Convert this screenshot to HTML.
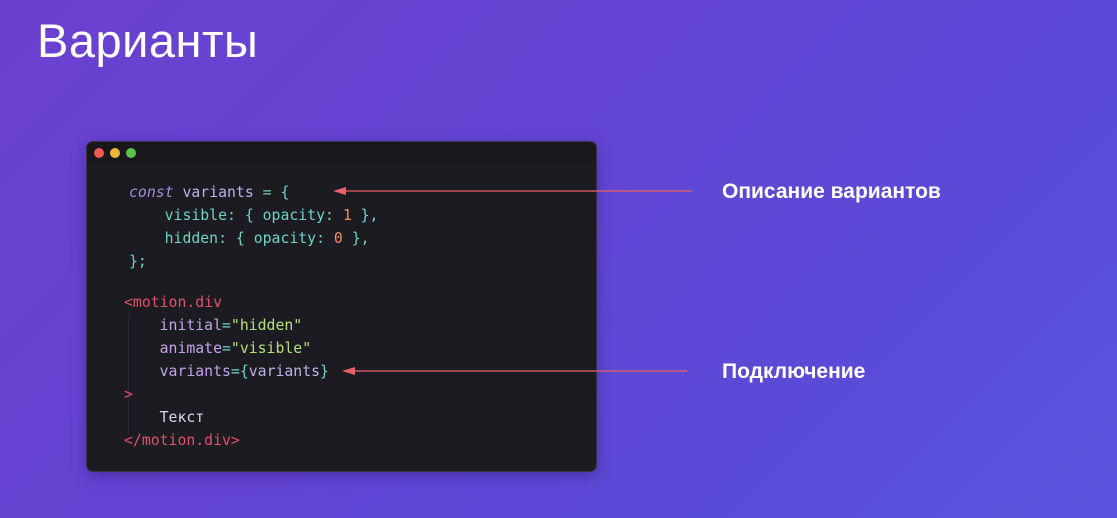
<!DOCTYPE html>
<html><head><meta charset="utf-8"><style>
html,body{margin:0;padding:0}
body{width:1117px;height:518px;overflow:hidden;position:relative;font-family:"Liberation Sans",sans-serif;
background:linear-gradient(135deg,#6b40cf 0%,#6345d3 45%,#5a4bd6 75%,#5b55dc 100%);}
h1{position:absolute;left:37px;top:13px;margin:0;font-weight:400;font-size:47px;color:#fff;letter-spacing:0.5px}
.win{position:absolute;left:86px;top:141px;width:511px;height:331px;background:#1c1b22;border-radius:7px;border:1px solid #3a3446;box-sizing:border-box;overflow:hidden;box-shadow:0 4px 14px rgba(30,10,80,.35)}
.bar{height:22px;background:#18171c;position:relative}
.dot{position:absolute;top:6px;width:10px;height:10px;border-radius:50%}
pre{position:absolute;margin:0;font-family:"DejaVu Sans Mono","Liberation Mono",monospace;font-size:14.8px;line-height:23px;color:#d8d8e0}
.k{color:#a58bd6;font-style:italic}.v{color:#c0b0ea}.p{color:#6fd3c3}.n{color:#f08f5a}.t{color:#e0506c}.s{color:#b4e07a}.a{color:#c2a4e8}
.lbl{position:absolute;color:#fff;font-size:21px;font-weight:700}
.guide{position:absolute;width:1px;background:#2b2a32}
</style></head><body>
<h1>Варианты</h1>
<div class="win">
<div class="bar"><div class="dot" style="left:7px;background:#ee5b53"></div><div class="dot" style="left:23px;background:#e9b73a"></div><div class="dot" style="left:39px;background:#5ec24a"></div></div>
<div class="guide" style="left:41px;top:172px;height:120px"></div>
<pre style="left:42px;top:39px"><span class="k">const</span> <span class="v">variants</span> <span class="p">=</span> <span class="p">{</span>
    <span class="p">visible: { opacity: </span><span class="n">1</span><span class="p"> },</span>
    <span class="p">hidden: { opacity: </span><span class="n">0</span><span class="p"> },</span>
<span class="p">};</span></pre>
<pre style="left:37px;top:149px"><span class="t">&lt;motion.div</span>
    <span class="a">initial</span><span class="p">=</span><span class="s">"hidden"</span>
    <span class="a">animate</span><span class="p">=</span><span class="s">"visible"</span>
    <span class="a">variants</span><span class="p">={</span><span class="v">variants</span><span class="p">}</span>
<span class="t">&gt;</span>
    Текст
<span class="t">&lt;/motion.div&gt;</span></pre>
</div>
<svg width="1117" height="518" style="position:absolute;left:0;top:0">
<line x1="345" y1="191" x2="692" y2="191" stroke="#e8606a" stroke-width="1.3"/>
<polygon points="333,191 346,187 346,195" fill="#e8606a"/>
<line x1="354" y1="371" x2="687" y2="371" stroke="#e8606a" stroke-width="1.3"/>
<polygon points="342,371 355,367 355,375" fill="#e8606a"/>
</svg>
<div class="lbl" style="left:722px;top:180px">Описание вариантов</div>
<div class="lbl" style="left:722px;top:360px">Подключение</div>
</body></html>
